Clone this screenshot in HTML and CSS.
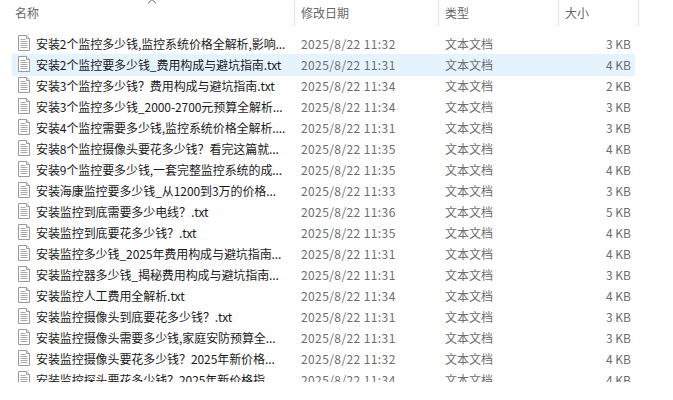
FILE: index.html
```html
<!DOCTYPE html>
<html lang="zh-CN">
<head>
    <meta charset="UTF-8">
    <title>文件列表</title>
    <link rel="stylesheet" href="styles.css">
</head>
<body>
    <svg class="sprite" width="0" height="0">
        <symbol id="txt" viewBox="0 0 12 16">
            <path d="M.5.5h8l3 3v12H.5z" fill="#fff" stroke="#9a9a9a"/>
            <path d="M8.5.5v3h3" fill="#eee" stroke="#9a9a9a"/>
            <path d="M2.5 4.5h5M2.5 6.5h7M2.5 8.5h7M2.5 10.5h7M2.5 12.5h7" stroke="#a8a8a8"/>
        </symbol>
    </svg>

    <div class="header">
        <div class="sort-arrow"></div>
        <div class="col-head col-name">名称</div>
        <div class="col-head col-date">修改日期</div>
        <div class="col-head col-type">类型</div>
        <div class="col-head col-size">大小</div>
    </div>

    <div class="list">
        <div class="row"><svg class="icon"><use href="#txt"/></svg><span class="name">安装2个监控多少钱,监控系统价格全解析,影响...</span><span class="date">2025/8/22 11:32</span><span class="type">文本文档</span><span class="size">3 KB</span></div>
        <div class="row selected"><svg class="icon"><use href="#txt"/></svg><span class="name">安装2个监控要多少钱_费用构成与避坑指南.txt</span><span class="date">2025/8/22 11:31</span><span class="type">文本文档</span><span class="size">4 KB</span></div>
        <div class="row"><svg class="icon"><use href="#txt"/></svg><span class="name">安装3个监控多少钱？费用构成与避坑指南.txt</span><span class="date">2025/8/22 11:34</span><span class="type">文本文档</span><span class="size">2 KB</span></div>
        <div class="row"><svg class="icon"><use href="#txt"/></svg><span class="name">安装3个监控多少钱_2000-2700元预算全解析...</span><span class="date">2025/8/22 11:34</span><span class="type">文本文档</span><span class="size">3 KB</span></div>
        <div class="row"><svg class="icon"><use href="#txt"/></svg><span class="name">安装4个监控需要多少钱,监控系统价格全解析....</span><span class="date">2025/8/22 11:31</span><span class="type">文本文档</span><span class="size">3 KB</span></div>
        <div class="row"><svg class="icon"><use href="#txt"/></svg><span class="name">安装8个监控摄像头要花多少钱？看完这篇就...</span><span class="date">2025/8/22 11:35</span><span class="type">文本文档</span><span class="size">4 KB</span></div>
        <div class="row"><svg class="icon"><use href="#txt"/></svg><span class="name">安装9个监控要多少钱,一套完整监控系统的成...</span><span class="date">2025/8/22 11:35</span><span class="type">文本文档</span><span class="size">4 KB</span></div>
        <div class="row"><svg class="icon"><use href="#txt"/></svg><span class="name">安装海康监控要多少钱_从1200到3万的价格...</span><span class="date">2025/8/22 11:33</span><span class="type">文本文档</span><span class="size">3 KB</span></div>
        <div class="row"><svg class="icon"><use href="#txt"/></svg><span class="name">安装监控到底需要多少电线？.txt</span><span class="date">2025/8/22 11:36</span><span class="type">文本文档</span><span class="size">5 KB</span></div>
        <div class="row"><svg class="icon"><use href="#txt"/></svg><span class="name">安装监控到底要花多少钱？.txt</span><span class="date">2025/8/22 11:35</span><span class="type">文本文档</span><span class="size">4 KB</span></div>
        <div class="row"><svg class="icon"><use href="#txt"/></svg><span class="name">安装监控多少钱_2025年费用构成与避坑指南...</span><span class="date">2025/8/22 11:31</span><span class="type">文本文档</span><span class="size">4 KB</span></div>
        <div class="row"><svg class="icon"><use href="#txt"/></svg><span class="name">安装监控器多少钱_揭秘费用构成与避坑指南...</span><span class="date">2025/8/22 11:31</span><span class="type">文本文档</span><span class="size">3 KB</span></div>
        <div class="row"><svg class="icon"><use href="#txt"/></svg><span class="name">安装监控人工费用全解析.txt</span><span class="date">2025/8/22 11:34</span><span class="type">文本文档</span><span class="size">4 KB</span></div>
        <div class="row"><svg class="icon"><use href="#txt"/></svg><span class="name">安装监控摄像头到底要花多少钱？.txt</span><span class="date">2025/8/22 11:31</span><span class="type">文本文档</span><span class="size">3 KB</span></div>
        <div class="row"><svg class="icon"><use href="#txt"/></svg><span class="name">安装监控摄像头需要多少钱,家庭安防预算全...</span><span class="date">2025/8/22 11:31</span><span class="type">文本文档</span><span class="size">3 KB</span></div>
        <div class="row"><svg class="icon"><use href="#txt"/></svg><span class="name">安装监控摄像头要花多少钱？2025年新价格...</span><span class="date">2025/8/22 11:32</span><span class="type">文本文档</span><span class="size">4 KB</span></div>
        <div class="row"><svg class="icon"><use href="#txt"/></svg><span class="name">安装监控探头要花多少钱？2025年新价格指...</span><span class="date">2025/8/22 11:34</span><span class="type">文本文档</span><span class="size">4 KB</span></div>
    </div>
</body>
</html>
```
FILE: styles.css
```css
html, body {
    margin: 0;
    height: 100%;
    overflow: hidden;
}

body {
    background-color: #fff;
    font-family: "Noto Sans CJK SC", "Noto Sans", sans-serif;
    font-size: 12px;
    color: #6d6d6d;
}

.sprite {
    position: absolute;
}

.header {
    position: relative;
    display: flex;
    height: 26px;
    margin-bottom: 7px;
}

.col-head {
    box-sizing: border-box;
    height: 26px;
    line-height: 26px;
    padding-left: 6px;
    border-right: 1px solid #e5e5e5;
    color: #666;
}

.col-name {
    width: 295px;
    padding-left: 15px;
}

.col-date {
    width: 144px;
}

.col-type {
    width: 120px;
}

.col-size {
    width: 80px;
}

.sort-arrow {
    position: absolute;
    left: 149px;
    top: 0;
    width: 5px;
    height: 5px;
    border-top: 1px solid #8a8a8a;
    border-left: 1px solid #8a8a8a;
    transform: rotate(45deg);
}

.list {
    height: 349px;
    overflow: hidden;
    margin: 0 38px 0 12px;
}

.row {
    display: flex;
    align-items: center;
    height: 21px;
    padding-bottom: 1px;
    box-sizing: border-box;
    white-space: nowrap;
}

.row.selected {
    background-color: #e5f3ff;
    box-shadow: 0 1px 0 #e5f3ff;
}

.icon {
    width: 12px;
    height: 16px;
    margin-left: 6px;
    flex-shrink: 0;
}

.name {
    width: 265px;
    margin-left: 6px;
    color: #1a1a1a;
    letter-spacing: -0.08px;
}

.date {
    width: 144px;
    letter-spacing: 0.4px;
}

.type {
    width: 119px;
}

.size {
    width: 67px;
    text-align: right;
}
```
